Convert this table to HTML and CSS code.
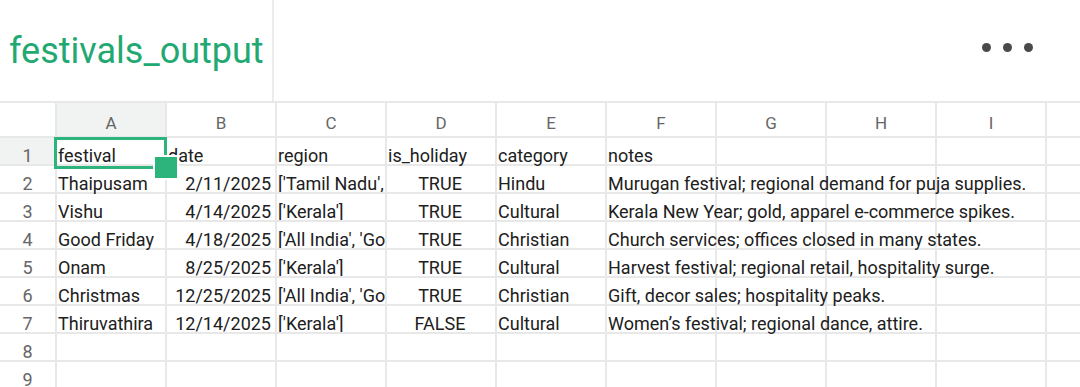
FILE: index.html
```html
<!DOCTYPE html>
<html>
<head>
<meta charset="utf-8">
<link rel="stylesheet" href="styles.css">
</head>
<body>
<div class="app">
  <header class="topbar">
    <div class="title-box"><h1 class="title">festivals_output</h1></div>
    <div class="spacer"></div>
    <div class="more" aria-label="More"><span></span><span></span><span></span></div>
  </header>
  <div class="sheet">
    <div class="corner"></div>
    <div class="colh sel">A</div><div class="colh">B</div><div class="colh">C</div><div class="colh">D</div><div class="colh">E</div><div class="colh">F</div><div class="colh">G</div><div class="colh">H</div><div class="colh">I</div><div class="colh last"></div>

    <div class="rowh sel">1</div>
    <div class="c">festival</div><div class="c">date</div><div class="c">region</div><div class="c">is_holiday</div><div class="c">category</div><div class="c wide">notes</div><div class="c"></div><div class="c"></div><div class="c"></div><div class="c last"></div>

    <div class="rowh">2</div>
    <div class="c">Thaipusam</div><div class="c num">2/11/2025</div><div class="c clip">['Tamil Nadu', 'Puducherry']</div><div class="c ctr">TRUE</div><div class="c">Hindu</div><div class="c wide">Murugan festival; regional demand for puja supplies.</div><div class="c"></div><div class="c"></div><div class="c"></div><div class="c last"></div>

    <div class="rowh">3</div>
    <div class="c">Vishu</div><div class="c num">4/14/2025</div><div class="c clip">['Kerala']</div><div class="c ctr">TRUE</div><div class="c">Cultural</div><div class="c wide">Kerala New Year; gold, apparel e-commerce spikes.</div><div class="c"></div><div class="c"></div><div class="c"></div><div class="c last"></div>

    <div class="rowh">4</div>
    <div class="c">Good Friday</div><div class="c num">4/18/2025</div><div class="c clip">['All India', 'Goa', 'Kerala']</div><div class="c ctr">TRUE</div><div class="c">Christian</div><div class="c wide">Church services; offices closed in many states.</div><div class="c"></div><div class="c"></div><div class="c"></div><div class="c last"></div>

    <div class="rowh">5</div>
    <div class="c">Onam</div><div class="c num">8/25/2025</div><div class="c clip">['Kerala']</div><div class="c ctr">TRUE</div><div class="c">Cultural</div><div class="c wide">Harvest festival; regional retail, hospitality surge.</div><div class="c"></div><div class="c"></div><div class="c"></div><div class="c last"></div>

    <div class="rowh">6</div>
    <div class="c">Christmas</div><div class="c num">12/25/2025</div><div class="c clip">['All India', 'Goa', 'Kerala']</div><div class="c ctr">TRUE</div><div class="c">Christian</div><div class="c wide">Gift, decor sales; hospitality peaks.</div><div class="c"></div><div class="c"></div><div class="c"></div><div class="c last"></div>

    <div class="rowh">7</div>
    <div class="c">Thiruvathira</div><div class="c num">12/14/2025</div><div class="c clip">['Kerala']</div><div class="c ctr">FALSE</div><div class="c">Cultural</div><div class="c wide">Women’s festival; regional dance, attire.</div><div class="c"></div><div class="c"></div><div class="c"></div><div class="c last"></div>

    <div class="rowh">8</div>
    <div class="c"></div><div class="c"></div><div class="c"></div><div class="c"></div><div class="c"></div><div class="c"></div><div class="c"></div><div class="c"></div><div class="c"></div><div class="c last"></div>

    <div class="rowh">9</div>
    <div class="c"></div><div class="c"></div><div class="c"></div><div class="c"></div><div class="c"></div><div class="c"></div><div class="c"></div><div class="c"></div><div class="c"></div><div class="c last"></div>

    <div class="selection"></div>
    <div class="handle"></div>
  </div>
</div>
</body>
</html>
```

FILE: styles.css
```css
* { box-sizing: border-box; }
html, body { margin: 0; padding: 0; background: #fff; }
body {
  width: 1080px;
  height: 387px;
  overflow: hidden;
  font-family: Roboto, "Noto Sans", "Liberation Sans", sans-serif;
}
.app { width: 1080px; }

.topbar {
  display: flex;
  align-items: stretch;
  height: 103px;
  border-bottom: 2px solid #e8e8e8;
}
.title-box {
  width: 274px;
  border-right: 2px solid #ececec;
  display: flex;
  align-items: center;
  padding-left: 9px;
}
.title {
  margin: 0;
  font-size: 36px;
  font-weight: 400;
  color: #22a972;
  letter-spacing: 0;
}
.spacer { flex: 1; }
.more {
  display: flex;
  align-items: center;
  gap: 12px;
  padding-right: 47px;
  padding-bottom: 6px;
}
.more span {
  width: 9px;
  height: 9px;
  border-radius: 50%;
  background: #4a4a4a;
}

.sheet {
  position: relative;
  display: grid;
  grid-template-columns: 57px repeat(9, 110px) 1fr;
  grid-template-rows: 35px;
  grid-auto-rows: 28px;
}
.corner, .colh, .rowh, .c {
  border-right: 2px solid #e8e8e8;
  border-bottom: 2px solid #e8e8e8;
}
.last { border-right: none; }
.colh {
  display: flex;
  align-items: center;
  justify-content: center;
  font-size: 17px;
  color: #666;
  padding-top: 6px;
}
.rowh {
  font-size: 18px;
  color: #666;
  text-align: center;
  line-height: 24px;
  padding-top: 6px;
  overflow: hidden;
}
.sel { background: #f1f3f3; }
.c {
  font-size: 18px;
  color: #202020;
  white-space: nowrap;
  padding: 6px 3px 0 1px;
  line-height: 24px;
}
.clip { overflow: hidden; padding-right: 0; }
.num { text-align: right; padding-right: 4px; }
.ctr { text-align: center; }
.wide {
  overflow: visible;
  position: relative;
  z-index: 1;
}

.selection {
  position: absolute;
  left: 54px;
  top: 34px;
  width: 113px;
  height: 32px;
  border: 3px solid #2db47c;
  pointer-events: none;
  z-index: 2;
}
.handle {
  position: absolute;
  left: 153px;
  top: 52px;
  width: 26px;
  height: 25px;
  background: #2db47c;
  border: 2px solid #fff;
  z-index: 3;
}
```
